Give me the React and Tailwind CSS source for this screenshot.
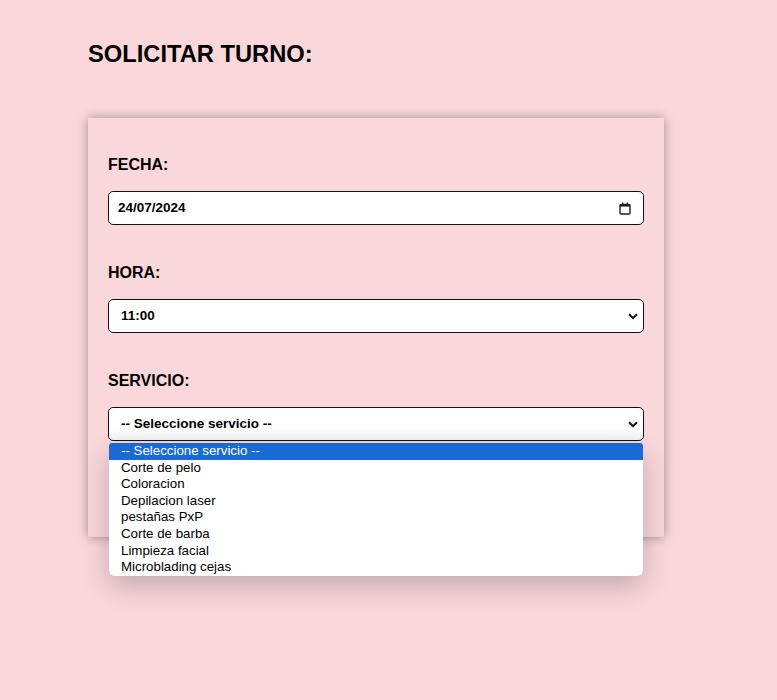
const SERVICIOS = [
  "-- Seleccione servicio --",
  "Corte de pelo",
  "Coloracion",
  "Depilacion laser",
  "pestañas PxP",
  "Corte de barba",
  "Limpieza facial",
  "Microblading cejas",
];

function Chevron() {
  return (
    <svg width="10" height="7" viewBox="0 0 10 7" className="shrink-0">
      <path d="M1 1.2 L5 5.2 L9 1.2" fill="none" stroke="#111" strokeWidth="2" />
    </svg>
  );
}

function CalendarIcon() {
  return (
    <svg width="12" height="13" viewBox="0 0 12 13" className="shrink-0">
      <rect x="1" y="2.5" width="10" height="9.5" rx="1" fill="none" stroke="#222" strokeWidth="1.4" />
      <rect x="1" y="2" width="10" height="2.6" fill="#222" />
      <rect x="3" y="0.5" width="1.4" height="2" fill="#222" />
      <rect x="7.6" y="0.5" width="1.4" height="2" fill="#222" />
    </svg>
  );
}

function Field({ label, children }) {
  return (
    <div className="flex flex-col gap-[17px]">
      <label className="text-[16px] font-bold leading-[18px]">{label}</label>
      {children}
    </div>
  );
}

export default function App() {
  const selected = 0;

  return (
    <div className="min-h-[700px] bg-[#fad7db] font-['Liberation_Sans',Arial,sans-serif] text-black">
      <div className="flex flex-col items-start gap-[50px] pl-[88px] pt-[40px]">
        <h1 className="text-[23.7px] font-bold leading-[28px]">SOLICITAR TURNO:</h1>

        <form className="flex w-[576px] flex-col gap-[39px] bg-[#fad7db] px-[20px] pb-[96px] pt-[38px] shadow-[0_0_10px_rgba(0,0,0,0.35)]">
          <Field label="FECHA:">
            <div className="flex h-[34px] items-center justify-between rounded-[5px] border border-[#111] bg-white pl-[9px] pr-[12px]">
              <span className="text-[13.5px] font-bold">24/07/2024</span>
              <CalendarIcon />
            </div>
          </Field>

          <Field label="HORA:">
            <div className="flex h-[34px] items-center justify-between rounded-[5px] border border-[#111] bg-white pl-[12px] pr-[5px]">
              <span className="text-[13.5px] font-bold">11:00</span>
              <Chevron />
            </div>
          </Field>

          <Field label="SERVICIO:">
            <div className="relative flex h-[34px] items-center justify-between rounded-[5px] border border-[#111] bg-[linear-gradient(180deg,#fff_60%,#f4f4f4)] pl-[12px] pr-[5px]">
              <span className="text-[13.5px] font-bold">-- Seleccione servicio --</span>
              <Chevron />

              <ul className="absolute left-0 right-0 top-[35px] z-10 flex flex-col overflow-hidden rounded-b-[6px] rounded-t-[3px] bg-white text-[13.3px] leading-[16.6px] shadow-[0_10px_28px_rgba(0,0,0,0.22)]">
                {SERVICIOS.map((s, i) => (
                  <li
                    key={s}
                    className={`h-[16.6px] pl-[12px] ${i === selected ? "bg-[#1a6ad3] text-white" : "text-black"}`}
                  >
                    {s}
                  </li>
                ))}
              </ul>
            </div>
          </Field>
        </form>
      </div>
    </div>
  );
}
